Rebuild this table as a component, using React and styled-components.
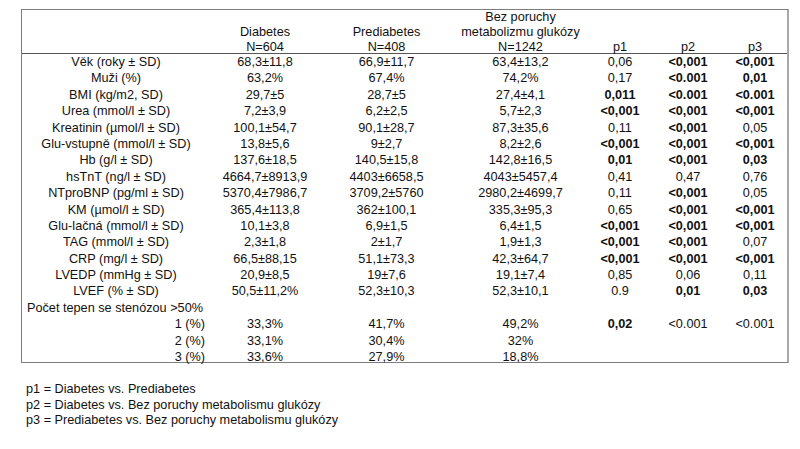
import styled, { createGlobalStyle } from 'styled-components';

const GlobalStyle = createGlobalStyle`
  html, body {
    margin: 0;
    padding: 0;
    background: #fff;
  }
  body {
    font-family: 'Liberation Sans', Arial, sans-serif;
    font-size: 12.7px;
    color: #111;
  }
`;

//column widths, picked so each column centre sits where the scan has it
const COLS = '188px 110px 133px 135px 64px 72px 62px';

//a leading * marks a bold p value
const rows = [
  ['Věk (roky ± SD)', '68,3±11,8', '66,9±11,7', '63,4±13,2', '0,06', '*<0,001', '*<0,001'],
  ['Muži (%)', '63,2%', '67,4%', '74,2%', '0,17', '*<0.001', '*0,01'],
  ['BMI (kg/m2, SD)', '29,7±5', '28,7±5', '27,4±4,1', '*0,011', '*<0.001', '*<0.001'],
  ['Urea (mmol/l ± SD)', '7,2±3,9', '6,2±2,5', '5,7±2,3', '*<0,001', '*<0,001', '*<0,001'],
  ['Kreatinin (µmol/l ± SD)', '100,1±54,7', '90,1±28,7', '87,3±35,6', '0,11', '*<0,001', '0,05'],
  ['Glu-vstupně (mmol/l ± SD)', '13,8±5,6', '9±2,7', '8,2±2,6', '*<0,001', '*<0,001', '*<0,001'],
  ['Hb (g/l ± SD)', '137,6±18,5', '140,5±15,8', '142,8±16,5', '*0,01', '*<0,001', '*0,03'],
  ['hsTnT (ng/l ± SD)', '4664,7±8913,9', '4403±6658,5', '4043±5457,4', '0,41', '0,47', '0,76'],
  ['NTproBNP (pg/ml ± SD)', '5370,4±7986,7', '3709,2±5760', '2980,2±4699,7', '0,11', '*<0,001', '0,05'],
  ['KM (µmol/l ± SD)', '365,4±113,8', '362±100,1', '335,3±95,3', '0,65', '*<0,001', '*<0,001'],
  ['Glu-lačná (mmol/l ± SD)', '10,1±3,8', '6,9±1,5', '6,4±1,5', '*<0,001', '*<0,001', '*<0,001'],
  ['TAG (mmol/l ± SD)', '2,3±1,8', '2±1,7', '1,9±1,3', '*<0,001', '*<0,001', '0,07'],
  ['CRP (mg/l ± SD)', '66,5±88,15', '51,1±73,3', '42,3±64,7', '*<0,001', '*<0,001', '*<0,001'],
  ['LVEDP (mmHg ± SD)', '20,9±8,5', '19±7,6', '19,1±7,4', '0,85', '0,06', '0,11'],
  ['LVEF (% ± SD)', '50,5±11,2%', '52,3±10,3', '52,3±10,1', '0.9', '*0,01', '*0,03'],
];

const stenosis = [
  ['1 (%)', '33,3%', '41,7%', '49,2%', '*0,02', '<0.001', '<0.001'],
  ['2 (%)', '33,1%', '30,4%', '32%', '', '', ''],
  ['3 (%)', '33,6%', '27,9%', '18,8%', '', '', ''],
];

const notes = [
  'p1 = Diabetes vs. Prediabetes',
  'p2 = Diabetes vs. Bez poruchy metabolismu glukózy',
  'p3 = Prediabetes vs. Bez poruchy metabolismu glukózy',
];

const Value = ({ text }) => {
  const bold = text.startsWith('*');
  return <Cell $bold={bold}>{bold ? text.slice(1) : text}</Cell>;
};

const DataRow = ({ row, sub }) => {
  const [label, ...values] = row;
  return (
    <Row>
      <Cell $align={sub ? 'right' : 'center'}>{label}</Cell>
      {values.map((v, i) => (
        <Value key={i} text={v} />
      ))}
    </Row>
  );
};

const App = () => {
  return (
    <Page>
      <GlobalStyle />
      <Table>
        <Head>
          <HeadCell />
          <HeadCell>
            Diabetes
            <br />
            N=604
          </HeadCell>
          <HeadCell>
            Prediabetes
            <br />
            N=408
          </HeadCell>
          <HeadCell>
            Bez poruchy
            <br />
            metabolizmu glukózy
            <br />
            N=1242
          </HeadCell>
          <HeadCell>p1</HeadCell>
          <HeadCell>p2</HeadCell>
          <HeadCell>p3</HeadCell>
        </Head>
        <Body>
          {rows.map((r) => (
            <DataRow key={r[0]} row={r} />
          ))}
          <Row>
            <Cell $align='left' $span>
              Počet tepen se stenózou &gt;50%
            </Cell>
          </Row>
          {stenosis.map((r) => (
            <DataRow key={r[0]} row={r} sub />
          ))}
        </Body>
      </Table>
      <Notes>
        {notes.map((n) => (
          <Note key={n}>{n}</Note>
        ))}
      </Notes>
    </Page>
  );
};

const Page = styled.div`
  width: 800px;
  height: 449px;
  padding-top: 9px;
  box-sizing: border-box;
  overflow: hidden;
`;

const Table = styled.div`
  margin-left: 21px;
  width: 768px;
  box-sizing: border-box;
  border: 1px solid #7d7d7d;
  border-right: 2px solid #a8a8a8;
`;

const Head = styled.div`
  display: grid;
  grid-template-columns: ${COLS};
  height: 43px;
  align-items: end;
  line-height: 15px;
  border-bottom: 1px solid #555;
`;

const HeadCell = styled.div`
  text-align: center;
  white-space: nowrap;
  margin-bottom: -1.5px;
`;

const Body = styled.div`
  margin-bottom: -3px;
`;

const Row = styled.div`
  display: grid;
  grid-template-columns: ${COLS};
  height: 16.4px;
  line-height: 16.4px;
  white-space: nowrap;
`;

const Cell = styled.div`
  text-align: ${(p) => p.$align || 'center'};
  font-weight: ${(p) => (p.$bold ? 700 : 400)};
  padding: 0 5px;
  grid-column: ${(p) => (p.$span ? '1 / span 2' : 'auto')};
`;

const Notes = styled.div`
  margin: 19px 0 0 26px;
  line-height: 15.5px;
`;

const Note = styled.div``;

export default App;
